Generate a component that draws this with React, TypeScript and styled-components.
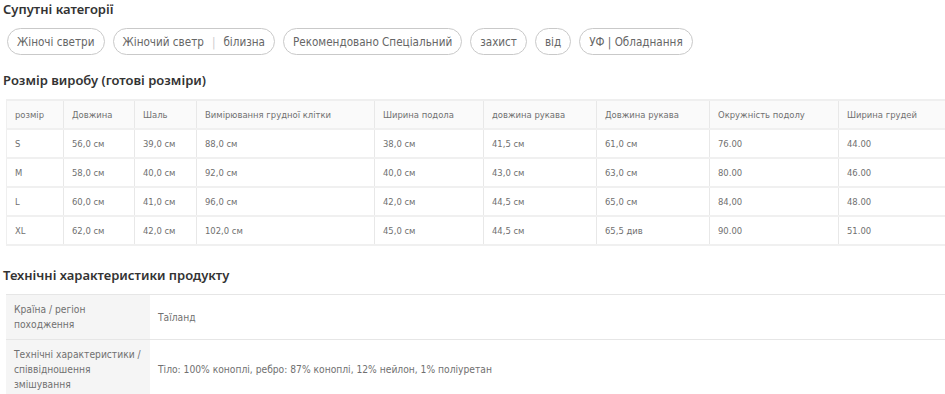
import React from "react";
import styled, { createGlobalStyle } from "styled-components";

const GlobalStyle = createGlobalStyle`
  html, body {
    margin: 0;
    padding: 0;
    background: #fff;
    overflow: hidden;
  }
  body {
    font-family: "DejaVu Sans Condensed", "DejaVu Sans", sans-serif;
    color: #333;
  }
`;

const Page = styled.div`
  width: 945px;
  padding: 0 0 0 3px;
  box-sizing: border-box;
  overflow: hidden;
`;

const Title = styled.h2`
  margin: 0;
  font-family: "Noto Sans", "Open Sans", sans-serif;
  font-size: 13px;
  font-weight: 600;
  line-height: 19px;
  color: #333;
`;

const Section = styled.section<{ $top: number }>`
  padding-top: ${(p) => p.$top}px;
`;

const ChipRow = styled.div`
  display: flex;
  gap: 8px;
  padding: 9px 0 0 4px;
`;

const Chip = styled.span`
  display: inline-flex;
  align-items: center;
  height: 27px;
  box-sizing: border-box;
  padding: 0 9px;
  border: 1px solid #c9c9c9;
  border-radius: 14px;
  font-size: 11.6px;
  color: #666;
  white-space: nowrap;
`;

const Sep = styled.span`
  color: #ccc;
  margin: 0 8px;
`;

const TableWrap = styled.div`
  padding: 9px 0 0 3px;
`;

const SizeTable = styled.table`
  border-collapse: collapse;
  table-layout: fixed;
  width: 1000px;
  font-size: 9.4px;
  color: #707070;
  border-top: 2px solid #efefef;
`;

const Th = styled.th`
  background: #fafafa;
  font-weight: normal;
  text-align: left;
  height: 27px;
  padding: 0 8px;
  border-left: 1px solid #e8e8e8;
  border-bottom: 2px solid #f0f0f0;
  &:first-child {
    border-left: 1px solid #efefef;
  }
`;

const Td = styled.td`
  height: 27px;
  padding: 0 8px;
  border-left: 1px solid #e8e8e8;
  border-bottom: 2px solid #f0f0f0;
  &:first-child {
    border-left: 1px solid #efefef;
  }
`;

const SpecTable = styled.table`
  border-collapse: collapse;
  table-layout: fixed;
  width: 1000px;
  font-size: 10.2px;
  color: #707070;
  border-top: 1px solid #e6e6e6;
`;

const SpecLabel = styled.th`
  width: 128px;
  background: #f5f5f5;
  font-weight: normal;
  text-align: left;
  vertical-align: middle;
  padding: 7px 8px;
  line-height: 15px;
  border-bottom: 1px solid #e6e6e6;
`;

const SpecValue = styled.td`
  padding: 7px 8px;
  line-height: 15px;
  border-bottom: 1px solid #e6e6e6;
`;

const categories: React.ReactNode[] = [
  "Жіночі светри",
  <>
    Жіночий светр<Sep>|</Sep>білизна
  </>,
  "Рекомендовано Спеціальний",
  "захист",
  "від",
  "УФ | Обладнання",
];

const colWidths = [57, 71, 62, 178, 109, 113, 113, 129, 168];

const headers = [
  "розмір",
  "Довжина",
  "Шаль",
  "Вимірювання грудної клітки",
  "Ширина подола",
  "довжина рукава",
  "Довжина рукава",
  "Окружність подолу",
  "Ширина грудей",
];

const rows = [
  ["S", "56,0 см", "39,0 см", "88,0 см", "38,0 см", "41,5 см", "61,0 см", "76.00", "44.00"],
  ["M", "58,0 см", "40,0 см", "92,0 см", "40,0 см", "43,0 см", "63,0 см", "80.00", "46.00"],
  ["L", "60,0 см", "41,0 см", "96,0 см", "42,0 см", "44,5 см", "65,0 см", "84,00", "48.00"],
  ["XL", "62,0 см", "42,0 см", "102,0 см", "45,0 см", "44,5 см", "65,5 див", "90.00", "51.00"],
];

const specs: [string, string][] = [
  ["Країна / регіон походження", "Таїланд"],
  [
    "Технічні характеристики / співвідношення змішування",
    "Тіло: 100% коноплі, ребро: 87% коноплі, 12% нейлон, 1% поліуретан",
  ],
];

export default function App() {
  return (
    <>
      <GlobalStyle />
      <Page>
        <Section $top={0}>
          <Title>Супутні категорії</Title>
          <ChipRow>
            {categories.map((c, i) => (
              <Chip key={i}>{c}</Chip>
            ))}
          </ChipRow>
        </Section>

        <Section $top={16}>
          <Title>Розмір виробу (готові розміри)</Title>
          <TableWrap>
            <SizeTable>
              <colgroup>
                {colWidths.map((w, i) => (
                  <col key={i} style={{ width: w }} />
                ))}
              </colgroup>
              <thead>
                <tr>
                  {headers.map((h) => (
                    <Th key={h}>{h}</Th>
                  ))}
                </tr>
              </thead>
              <tbody>
                {rows.map((r) => (
                  <tr key={r[0]}>
                    {r.map((v, i) => (
                      <Td key={i}>{v}</Td>
                    ))}
                  </tr>
                ))}
              </tbody>
            </SizeTable>
          </TableWrap>
        </Section>

        <Section $top={20}>
          <Title>Технічні характеристики продукту</Title>
          <TableWrap>
            <SpecTable>
              <tbody>
                {specs.map(([k, v]) => (
                  <tr key={k}>
                    <SpecLabel>{k}</SpecLabel>
                    <SpecValue>{v}</SpecValue>
                  </tr>
                ))}
              </tbody>
            </SpecTable>
          </TableWrap>
        </Section>
      </Page>
    </>
  );
}
